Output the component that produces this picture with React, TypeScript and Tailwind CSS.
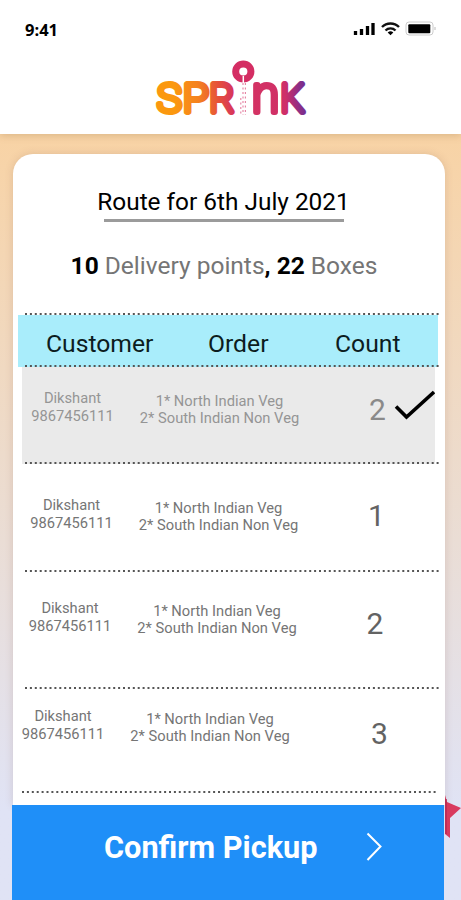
import React from 'react';
import { clsx } from 'clsx';

type Stop = {
  name: string;
  phone: string;
  order: string[];
  count: number;
  picked?: boolean;
  row: string;
  countPos: string;
};

const order = ['1* North Indian Veg', '2* South Indian Non Veg'];

const stops: Stop[] = [
  { name: 'Dikshant', phone: '9867456111', order, count: 2, picked: true, row: 'ml-[9px] h-[95px] pl-[9.500px] pt-[23px]', countPos: 'ml-[69px] mt-[2px]' },
  { name: 'Dikshant', phone: '9867456111', order, count: 1, row: 'ml-[9px] h-[106px] pl-[8.500px] pt-[33px]', countPos: 'ml-[69px] mt-[1px]' },
  { name: 'Dikshant', phone: '9867456111', order, count: 2, row: 'ml-[9px] h-[115px] pl-[7px] pt-[28px]', countPos: 'ml-[69px] mt-[6px]' },
  { name: 'Dikshant', phone: '9867456111', order, count: 3, row: 'ml-[9px] h-[102px] pl-0 pt-[19px]', countPos: 'ml-[80.500px] mt-[8px]' },
];

const Logo: React.FC = () => (
  <svg width="160" height="74" viewBox="150 56 160 74" className="block">
    <defs>
      <linearGradient id="brand" gradientUnits="userSpaceOnUse" x1="156" y1="100" x2="306" y2="92">
        <stop offset="0.12" stopColor="#fb980f" />
        <stop offset="0.28" stopColor="#f58220" />
        <stop offset="0.42" stopColor="#e5503a" />
        <stop offset="0.52" stopColor="#d63460" />
        <stop offset="0.86" stopColor="#cf2f68" />
        <stop offset="1" stopColor="#6d2e94" />
      </linearGradient>
    </defs>
    <g
      fill="none"
      stroke="url(#brand)"
      strokeWidth="6"
      strokeLinejoin="round"
      strokeLinecap="round"
      fontFamily="Roboto, sans-serif"
      fontWeight="100"
    >
      <text x="157.300" y="112" fontSize="38.500" textLength="24" lengthAdjust="spacingAndGlyphs">S</text>
      <text x="183" y="112" fontSize="39.500" textLength="25.500" lengthAdjust="spacingAndGlyphs">P</text>
      <text x="209.5" y="112" fontSize="39.500" textLength="25" lengthAdjust="spacingAndGlyphs">R</text>
      <text x="252" y="112" fontSize="49.500" textLength="27" lengthAdjust="spacingAndGlyphs">n</text>
      <text x="280.5" y="112" fontSize="39.500" textLength="24" lengthAdjust="spacingAndGlyphs">K</text>
    </g>
    <circle cx="243.3" cy="71.5" r="7.6" fill="none" stroke="#d42d63" strokeWidth="7" />
    <path d="M243.300 76v7" stroke="#fff" strokeWidth="1.500" />
    <path
      d="M243 83v32M240.800 98v17M245.400 83v32"
      stroke="#d42d63"
      strokeWidth="1.100"
      strokeDasharray="2 2.500"
      opacity="0.6"
    />
  </svg>
);

const StatusIcons: React.FC = () => (
  <svg width="84" height="16" viewBox="353 20 84 16">
    <path d="M355.500 35v-4M361.500 35v-6M367.500 35v-9M373 35v-12" stroke="#000" strokeWidth="3.300" />
    <g fill="none" stroke="#111" strokeWidth="2.400">
      <path d="M382 27a12 12 0 0 1 17 0" />
      <path d="M385.500 30.500a7 7 0 0 1 10 0" />
    </g>
    <path d="M387.700 32.500a4 4 0 0 1 5.600 0l-2.800 2.700z" />
    <rect x="406" y="22" width="27" height="13" rx="3" fill="none" stroke="#ccc" />
    <rect x="408.300" y="24.300" width="22" height="9" rx="1" />
    <path d="M435 27v3" stroke="#bbb" />
  </svg>
);

const Dots: React.FC<{ className?: string }> = ({ className }) => (
  <svg width="414" height="2" className={clsx('block shrink-0', className)}>
    <path d="M0 1h414" stroke="#555" strokeWidth="1.900" strokeDasharray="2 2.900" />
  </svg>
);

const StopRow: React.FC<{ stop: Stop }> = ({ stop }) => (
  <div className={clsx('flex items-start text-[14.7px] leading-[17.5px] whitespace-nowrap', stop.row, stop.picked ? 'text-[#959595]' : 'text-[#757575]')}>
    <div className="flex w-[82px] flex-col items-center">
      <span>{stop.name}</span>
      <span>{stop.phone}</span>
    </div>
    <div className="mt-[2.5px] ml-[26px] flex w-[160px] flex-col items-center">
      {stop.order.map((line) => (
        <span key={line}>{line}</span>
      ))}
    </div>
    <span className={clsx('w-[18px] text-center text-[30px] leading-[36px]', stop.countPos, stop.picked ? 'text-[#8a8a8a]' : 'text-[#636363]')}>
      {stop.count}
    </span>
    {stop.picked && (
      <svg width="42" height="34" viewBox="0 0 42 34" className="ml-[6px]">
        <path d="M3 16.500l10.500 10.500L41 2" fill="none" stroke="#000" strokeWidth="3.600" />
      </svg>
    )}
  </div>
);

export default function App() {
  return (
    <div className="relative flex h-[900px] w-[461px] flex-col overflow-hidden bg-linear-to-b from-[#f8d3a5] from-15% via-[#eaddd5] via-60% to-[#e0e3f5] to-90% font-['Roboto',sans-serif]">
      <header className="relative h-[134px] shrink-0 bg-white shadow-[0_1px_8px_rgba(120,80,30,0.25)]">
        <div className="flex items-start justify-between pt-5 pr-6 pl-[25px]">
          <span className="font-['Open_Sans',sans-serif] text-[16.5px] leading-5 font-bold">9:41</span>
          <StatusIcons />
        </div>
        <div className="flex pt-4 pl-[150px]">
          <Logo />
        </div>
      </header>

      <svg width="16" height="44" viewBox="0 0 16 44" className="absolute top-[795px] left-[445px]">
        <path d="M0 0l2 7 14 6-11 10v20l-5-4z" fill="#d93a5f" />
        <path d="M1 4v35" stroke="#b92a55" strokeWidth="1.500" />
      </svg>

      <main className="relative mt-5 ml-[13px] flex h-[651px] w-[432px] shrink-0 flex-col rounded-t-[20px] bg-white shadow-[0_0_8px_rgba(120,80,60,0.18)]">
        <div className="flex h-[159px] shrink-0 flex-col items-center pt-[33px]">
          <h1 className="-ml-[11px] text-[24.4px] leading-[30px] whitespace-nowrap">Route for 6th July 2021</h1>
          <div className="mt-[2px] -ml-[11px] h-[3px] w-[240px] shrink-0 bg-[#9b9b9b]" />
          <p className="mt-[28px] -ml-[10px] text-[24.5px] leading-8 whitespace-nowrap text-[#757575]">
            <b className="text-black">10</b> Delivery points<b className="text-black">, 22</b> Boxes
          </p>
        </div>

        <Dots className="ml-3" />
        <div className="ml-[5px] w-[420px] shrink-0 bg-[#a9edfb]">
          <div className="flex h-[50px] items-center pt-[7px] pl-[28px] text-[24.7px] text-[#0c1c20]">
            <span className="w-[162px]">Customer</span>
            <span className="w-[127px]">Order</span>
            <span>Count</span>
          </div>
          <Dots className="ml-[7px]" />
        </div>

        <div className="relative">
          <div className="absolute inset-y-0 left-[9px] w-[413px] bg-[#eaeaea]" />
          <div className="relative">
            <StopRow stop={stops[0]} />
            <Dots className="ml-3" />
          </div>
        </div>
        {stops.slice(1).map((stop, i) => (
          <div key={i}>
            <StopRow stop={stop} />
            <Dots className={i === 2 ? 'ml-[9px]' : 'ml-3'} />
          </div>
        ))}
      </main>

      <footer className="relative ml-3 flex h-[95px] w-[432px] shrink-0 bg-[#1f8ff8]">
        <span className="w-[354px] pt-[25px] pl-[92px] text-[30.7px] leading-9 font-bold text-white">Confirm Pickup</span>
        <svg width="18" height="30" viewBox="0 0 18 30" className="mt-[27px]">
          <path d="M1.500 1.500L14.500 14.500 1.500 28" fill="none" stroke="#fff" strokeWidth="2" />
        </svg>
      </footer>
    </div>
  );
}
